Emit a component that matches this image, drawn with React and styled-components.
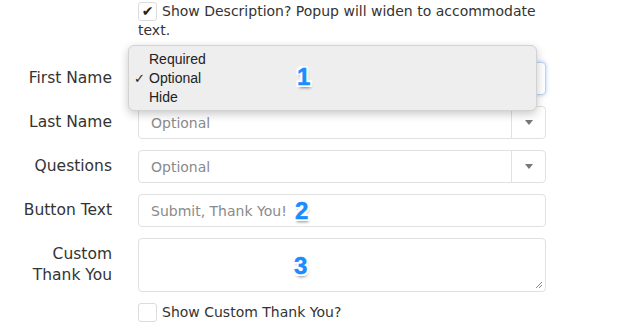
import React from "react";
import styled, { createGlobalStyle } from "styled-components";

const GlobalStyle = createGlobalStyle`
  body {
    margin: 0;
    background: #ffffff;
    font-family: "DejaVu Sans", "Open Sans", sans-serif;
    color: #333333;
  }
`;

const Page = styled.div`
  position: relative;
  width: 636px;
  height: 336px;
  overflow: hidden;
  padding-top: 2px;
  box-sizing: border-box;
`;

const Form = styled.div`
  display: grid;
  grid-template-columns: 112px 408px;
  column-gap: 26px;
  row-gap: 11px;
  align-items: center;
`;

const Label = styled.div`
  text-align: right;
  font-size: 15.5px;
  line-height: 21px;
  color: #333;
  white-space: nowrap;
`;

const Field = styled.div`
  grid-column: 2;
  position: relative;
`;

const CheckRow = styled.div`
  grid-column: 2;
  font-size: 14px;
  line-height: 19px;
  color: #333;
  margin-bottom: ${p => p.$gapBelow || 0}px;
`;

const Box = styled.span`
  display: inline-flex;
  align-items: center;
  justify-content: center;
  width: 17px;
  height: 17px;
  border: 1px solid #dcdcdc;
  border-radius: 3px;
  vertical-align: top;
  margin-right: 5px;
  font-size: 14px;
  line-height: 17px;
  color: #222;
  background: #fff;
`;

const Select = styled.div`
  display: flex;
  height: 33px;
  box-sizing: border-box;
  border: 1px solid ${p => (p.$focus ? "#b9d3f2" : "#e1e1e1")};
  border-radius: 4px;
  box-shadow: ${p => (p.$focus ? "0 0 4px rgba(90,150,230,0.45)" : "none")};
  background: #fff;
`;

const Value = styled.div`
  flex: 1;
  display: flex;
  align-items: center;
  padding-left: 12px;
  font-size: 14px;
  color: #8a8a8a;
`;

const Caret = styled.div`
  width: 33px;
  border-left: 1px solid #e1e1e1;
  display: flex;
  align-items: center;
  justify-content: center;
  &::after {
    content: "";
    border-left: 4px solid transparent;
    border-right: 4px solid transparent;
    border-top: 5px solid #777;
  }
`;

const TextInput = styled.div`
  height: 33px;
  box-sizing: border-box;
  border: 1px solid #e1e1e1;
  border-radius: 4px;
  display: flex;
  align-items: center;
  padding-left: 12px;
  font-size: 14px;
  color: #8a8a8a;
`;

const TextArea = styled.div`
  position: relative;
  height: 54px;
  box-sizing: border-box;
  border: 1px solid #e1e1e1;
  border-radius: 4px;
`;

const Grip = styled.svg`
  position: absolute;
  right: 2px;
  bottom: 2px;
`;

const Popup = styled.div`
  position: absolute;
  left: 128px;
  top: 45px;
  width: 409px;
  height: 66px;
  box-sizing: border-box;
  background: #eeeeee;
  border: 1px solid #d2d2d2;
  border-radius: 6px;
  box-shadow: 0 3px 10px rgba(0, 0, 0, 0.22);
  padding-top: 4px;
  font-family: "Liberation Sans", Arial, sans-serif;
  font-size: 14px;
  color: #222;
`;

const Item = styled.div`
  position: relative;
  height: 19px;
  line-height: 19px;
  padding-left: 20px;
  &::before {
    content: "${p => (p.$checked ? "✓" : "")}";
    position: absolute;
    left: 5px;
    font-size: 13px;
  }
`;

const Badge = styled.div`
  position: absolute;
  left: ${p => p.$x}px;
  top: ${p => p.$y}px;
  font-family: "Liberation Sans", Arial, sans-serif;
  font-weight: bold;
  font-size: 24px;
  line-height: 24px;
  color: #1a8cff;
  -webkit-text-stroke: 0.5px #1a8cff;
  text-shadow: -2px 0 0 #fff, 2px 0 0 #fff, 0 -2px 0 #fff, 0 2px 0 #fff,
    -2px -2px 0 #fff, 2px 2px 0 #fff, -2px 2px 0 #fff, 2px -2px 0 #fff,
    1px 3px 3px rgba(0, 0, 0, 0.45);
`;

const rows = [
  { label: "Last Name", value: "Optional" },
  { label: "Questions", value: "Optional" }
];

export default function App() {
  return (
    <Page>
      <GlobalStyle />
      <Form>
        <CheckRow $gapBelow={11}>
          <Box>✔</Box>Show Description? Popup will widen to accommodate text.
        </CheckRow>

        <Label>First Name</Label>
        <Field>
          <Select $focus>
            <Value>Optional</Value>
            <Caret />
          </Select>
        </Field>

        {rows.map(r => (
          <React.Fragment key={r.label}>
            <Label>{r.label}</Label>
            <Field>
              <Select>
                <Value>{r.value}</Value>
                <Caret />
              </Select>
            </Field>
          </React.Fragment>
        ))}

        <Label>Button Text</Label>
        <Field>
          <TextInput>Submit, Thank You!</TextInput>
        </Field>

        <Label>
          Custom
          <br />
          Thank You
        </Label>
        <Field>
          <TextArea>
            <Grip width="8" height="8" viewBox="0 0 8 8">
              <path d="M7 1L1 7M7 4L4 7" stroke="#888" strokeWidth="1" />
            </Grip>
          </TextArea>
        </Field>

        <CheckRow>
          <Box />Show Custom Thank You?
        </CheckRow>
      </Form>

      <Popup>
        <Item>Required</Item>
        <Item $checked>Optional</Item>
        <Item>Hide</Item>
      </Popup>

      <Badge $x={297} $y={65}>1</Badge>
      <Badge $x={295} $y={199}>2</Badge>
      <Badge $x={294} $y={254}>3</Badge>
    </Page>
  );
}
